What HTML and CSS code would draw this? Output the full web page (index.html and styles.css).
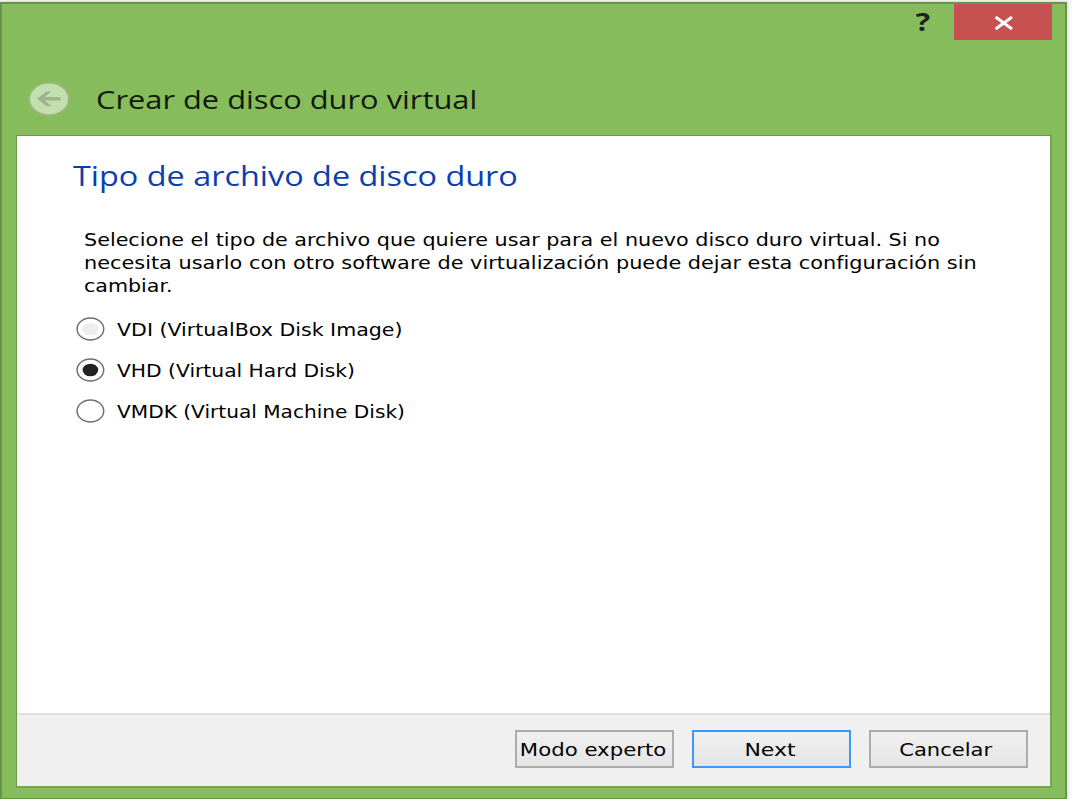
FILE: index.html
```html
<!DOCTYPE html>
<html lang="es">
<head>
<meta charset="utf-8">
<title>Crear de disco duro virtual</title>
<link rel="stylesheet" href="styles.css">
</head>
<body>
<div class="window">
  <div class="controls">
    <span class="help"><span class="wide mark">?</span></span>
    <button class="close" aria-label="Cerrar">
      <svg width="20" height="16" viewBox="0 0 20 16"><path d="M1.6 2 18 14M18 2 1.6 14" stroke="#fff" stroke-width="2.9" fill="none"/></svg>
    </button>
  </div>
  <header class="header">
    <svg class="back" width="44" height="38" viewBox="0 0 44 38">
      <ellipse cx="22" cy="19" rx="19.7" ry="16" fill="#c4dfae" stroke="#a0b689" stroke-width="1.7"/>
      <path d="M33.5 18.8H13" fill="none" stroke="#9fb28e" stroke-width="3.4"/>
      <path d="M10 18.8 19.5 11.5H24.5L15.5 18.8 24.5 26H19.5Z" fill="#9fb28e"/>
    </svg>
    <h1 class="title"><span class="wide">Crear de disco duro virtual</span></h1>
  </header>
  <main class="panel">
    <section class="content">
      <h2 class="subtitle"><span class="wide">Tipo de archivo de disco duro</span></h2>
      <p class="intro">
        <span class="wide line-1">Selecione el tipo de archivo que quiere usar para el nuevo disco duro virtual. Si no</span>
        <span class="wide line-2">necesita usarlo con otro software de virtualización puede dejar esta configuración sin</span>
        <span class="wide line-3">cambiar.</span>
      </p>
      <div class="options">
        <div class="option"><svg class="radio" width="30" height="26" viewBox="0 0 30 26"><ellipse cx="15.4" cy="13" rx="13.3" ry="11" fill="#fff" stroke="#707070" stroke-width="1.5"/><ellipse cx="15.4" cy="13" rx="8" ry="6.3" fill="#eee"/></svg><span class="wide vdi">VDI (VirtualBox Disk Image)</span></div>
        <div class="option"><svg class="radio" width="30" height="26" viewBox="0 0 30 26"><ellipse cx="15.4" cy="13" rx="13.3" ry="11" fill="#fff" stroke="#707070" stroke-width="1.5"/><ellipse cx="15.4" cy="13" rx="7.8" ry="6.3" fill="#222"/></svg><span class="wide vhd">VHD (Virtual Hard Disk)</span></div>
        <div class="option"><svg class="radio" width="30" height="26" viewBox="0 0 30 26"><ellipse cx="15.4" cy="13" rx="13.3" ry="11" fill="#fff" stroke="#707070" stroke-width="1.5"/></svg><span class="wide vmdk">VMDK (Virtual Machine Disk)</span></div>
      </div>
    </section>
    <footer class="footer">
      <button class="button"><span class="wide expert">Modo experto</span></button>
      <button class="button primary"><span class="wide next">Next</span></button>
      <button class="button"><span class="wide cancel">Cancelar</span></button>
    </footer>
  </main>
</div>
</body>
</html>
```
FILE: styles.css
```css
* { box-sizing: border-box; }

body {
  margin: 0;
  height: 799px;
  padding: 2px 5px 0 0;
  overflow: hidden;
  background: #f8f8f8;
  color: #000;
  font: 18px/23.2px "DejaVu Sans", Verdana, sans-serif;
}

.window {
  height: 797px;
  display: flex;
  flex-direction: column;
  padding: 0 13px 10px 14px;
  background: #86bc5b;
  border: 2px solid #68944a;
  border-bottom-width: 1px;
  box-shadow: 0 0 3px #bbb;
}

/* Glyphs are stretched horizontally from their left edge. */
.wide {
  display: inline-block;
  white-space: nowrap;
  transform: scaleX(var(--stretch, 1));
  transform-origin: 0 50%;
}

.controls {
  height: 36px;
  display: flex;
  justify-content: flex-end;
}

.help {
  width: 62px;
  padding-top: 4px;
  text-align: center;
  font: bold 25px/26px "Open Sans", sans-serif;
  color: #211d26;
}

.mark {
  --stretch: 1.2;
  transform-origin: 50% 50%;
}

.close {
  width: 98px;
  height: 36px;
  padding: 2px 0 0 2px;
  border: 0;
  background: #c75050;
  display: flex;
  align-items: center;
  justify-content: center;
}

.header {
  height: 95px;
  display: flex;
  align-items: center;
  padding: 22px 0 0 11px;
}

.back { flex: none; }

.title {
  --stretch: 1.185;
  margin: 0 0 0 25px;
  font: 26px/36px "Open Sans", sans-serif;
  color: #10190a;
}

.panel {
  flex: 1;
  display: flex;
  flex-direction: column;
  border: 1px solid #6c9c48;
  border-right: 2px solid #75a74f;
  border-bottom: 2px solid #75a74f;
  background: #fff;
}

.content {
  flex: 1;
  padding: 21px 0 0 55px;
}

.subtitle {
  --stretch: 1.2;
  margin: 0 0 0 1px;
  font: 27px/38px "Open Sans", sans-serif;
  color: #0b3fae;
}

.intro {
  display: flex;
  flex-direction: column;
  align-items: flex-start;
  margin: 33px 0 0 12px;
}

.line-1 { --stretch: 1.15; }
.line-2 { --stretch: 1.157; }
.line-3 { --stretch: 1.145; }

.options { margin: 11px 0 0 3px; }

.option {
  height: 41px;
  display: flex;
  align-items: center;
}

.radio {
  flex: none;
  margin-right: 12px;
}

.vdi { --stretch: 1.142; }
.vhd { --stretch: 1.125; }
.vmdk { --stretch: 1.118; }

.footer {
  height: 73px;
  display: flex;
  justify-content: flex-end;
  gap: 18px;
  padding: 15px 22px 0 0;
  border-top: 2px solid #dfdfdf;
  background: #f0f0f0;
}

.button {
  width: 159px;
  height: 38px;
  padding: 1px 0 0;
  border: 2px solid #acacac;
  background: linear-gradient(#f0f0f0, #e5e5e5);
  color: #000;
  font: inherit;
  text-align: center;
}

.button .wide { transform-origin: 50% 50%; }
.primary { border-color: #3c99fa; }
.expert { --stretch: 1.18; margin: 0 0 0 -3px; }
.next { --stretch: 1.22; margin-left: -3px; }
.cancel { --stretch: 1.17; margin-left: -6px; }
```
